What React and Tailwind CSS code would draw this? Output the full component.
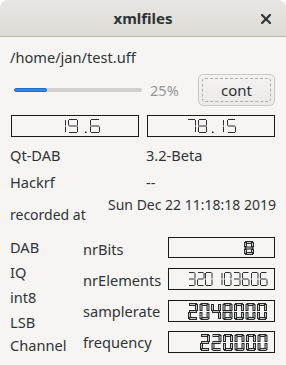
import React from 'react';

const SEGS = {
    '0': 'abcdef',
    '1': 'bc',
    '2': 'abged',
    '3': 'abgcd',
    '4': 'fgbc',
    '5': 'afgcd',
    '6': 'afgedc',
    '7': 'abc',
    '8': 'abcdefg',
    '9': 'abcdfg',
};

// one seven segment digit, hollow segments like QLCDNumber's outline mode
const Digit = ({ ch, x, y, w, h, t, hollow }) => {
    if (ch === '.') {
        return hollow
            ? <rect x={x + 0.5} y={y + h - t + 0.5} width={t - 1} height={t - 1} fill="none" stroke="#1c1f20" />
            : <rect x={x} y={y + h - 1.5} width={1.5} height={1.5} fill="#1c1f20" />;
    }
    const half = h / 2;
    const r = {
        a: [x + 1, y, w - 2, t],
        d: [x + 1, y + h - t, w - 2, t],
        g: [x + 1, y + half - t / 2, w - 2, t],
        f: [x, y + 1, t, half - 1.5],
        b: [x + w - t, y + 1, t, half - 1.5],
        e: [x, y + half + 0.5, t, half - 1.5],
        c: [x + w - t, y + half + 0.5, t, half - 1.5],
    };
    const list = (SEGS[ch] || '').split('');
    return (
        <g>
            {list.map((s) => {
                const [rx, ry, rw, rh] = r[s];
                return hollow ? (
                    <rect key={s} x={rx + 0.5} y={ry + 0.5} width={Math.max(rw - 1, 0.5)} height={Math.max(rh - 1, 0.5)} fill="#c9c7c4" stroke="#25292a" strokeWidth="1" />
                ) : (
                    <rect key={s} x={rx} y={ry} width={rw} height={rh} fill="#2b2f30" />
                );
            })}
        </g>
    );
};

const Lcd = ({ value, w, h, xs, top, dw, dh, t, hollow }) => (
    <div className="border border-[#1a1a1a] bg-[#f6f5f4] shrink-0" style={{ width: w, height: h }}>
        <svg width={w - 2} height={h - 2} viewBox={`1 1 ${w - 2} ${h - 2}`} aria-label={value} role="img">
            <title>{value}</title>
            {value.split('').map((ch, i) => (
                <Digit key={i} ch={ch} x={xs[i]} y={top} w={dw} h={dh} t={t} hollow={hollow} />
            ))}
        </svg>
    </div>
);

const App = () => {
    return (
        <div className="w-[286px] h-[365px] bg-[#f6f5f4] rounded-t-[8px] overflow-hidden font-['Noto_Sans',sans-serif] text-[#2e3436] text-[14.6px]">
            {/* title bar */}
            <div className="relative h-[37px] flex items-center justify-center bg-gradient-to-b from-[#e8e6e3] to-[#dedad6] border-b border-[#bfb8b1]">
                <span className="font-bold text-[15px] leading-none">xmlfiles</span>
                <svg className="absolute right-[15px] top-[14px]" width="10" height="10" viewBox="0 0 10 10">
                    <path d="M1 1 L9 9 M9 1 L1 9" stroke="#2e3436" strokeWidth="2.2" strokeLinecap="square" />
                </svg>
            </div>

            <div className="px-[10px]">
                <div className="mt-[10px] leading-[20px]">/home/jan/test.uff</div>

                <div className="mt-[7px] h-[32px] flex items-center">
                    <div className="ml-[4px] w-[128px] h-[4px] rounded-full bg-[#d3cfcc] overflow-hidden">
                        <div className="w-[33px] h-full rounded-full bg-[#3584e4] border border-[#1c6fd1]" />
                    </div>
                    <span className="ml-[8px] text-[#929595] leading-none">25%</span>
                    <button className="ml-auto mr-[1px] w-[77px] h-[32px] rounded-[5px] border border-[#cdc7c2] bg-gradient-to-b from-[#f4f2f1] to-[#ece9e7] p-[3px]">
                        <div className="w-full h-full rounded-[3px] border border-dashed border-[#b3afab] flex items-center justify-center leading-none text-[15px]">
                            cont
                        </div>
                    </button>
                </div>

                <div className="mt-[9px] flex gap-[8px] ml-[1px]">
                    <Lcd value="19.6" w={128} h={22} xs={[45, 57, 74, 79]} top={4} dw={10} dh={14} t={1} hollow={false} />
                    <Lcd value="78.15" w={128} h={22} xs={[40, 51, 65, 68, 80]} top={4} dw={9} dh={14} t={1} hollow={false} />
                </div>

                <div className="mt-[8px] flex leading-[20px]">
                    <span className="w-[136px]">Qt-DAB</span>
                    <span>3.2-Beta</span>
                </div>
                <div className="mt-[7px] flex leading-[20px]">
                    <span className="w-[136px]">Hackrf</span>
                    <span>--</span>
                </div>
                <div className="mt-[3px] h-[30px] flex leading-[20px]">
                    <span className="w-[98px] self-end text-[14px]">recorded at</span>
                    <span className="self-start text-[14px]">Sun Dec 22 11:18:18 2019</span>
                </div>

                <div className="mt-[12px] flex">
                    <div className="w-[73px] flex flex-col leading-[20px]">
                        <span>DAB</span>
                        <span className="mt-[5px]">IQ</span>
                        <span className="mt-[5px]">int8</span>
                        <span className="mt-[5px]">LSB</span>
                        <span className="mt-[3px]">Channel</span>
                    </div>
                    <div className="flex-1 flex flex-col">
                        <div className="h-[21px] flex items-center">
                            <span className="w-[85px] pt-[4px]">nrBits</span>
                            <Lcd value="8" w={107} h={21} xs={[76]} top={4} dw={10} dh={14} t={3} hollow={true} />
                        </div>
                        <div className="mt-[10px] h-[22px] flex items-center">
                            <span className="w-[85px] pt-[3px]">nrElements</span>
                            <Lcd value="320103606" w={107} h={22} xs={[20, 29, 37, 47, 56, 65, 74, 83, 92]} top={4} dw={7.5} dh={14} t={1} hollow={false} />
                        </div>
                        <div className="mt-[10px] h-[22px] flex items-center">
                            <span className="w-[85px] pt-[2px]">samplerate</span>
                            <Lcd value="2048000" w={107} h={22} xs={[20, 31.5, 43, 54.5, 66, 77.5, 89]} top={3} dw={10} dh={17} t={3} hollow={true} />
                        </div>
                        <div className="mt-[9px] h-[22px] flex items-center">
                            <span className="w-[85px] pt-[2px]">frequency</span>
                            <Lcd value="220000" w={107} h={22} xs={[32, 43.5, 55, 66.5, 78, 89.5]} top={3} dw={10} dh={17} t={3} hollow={true} />
                        </div>
                    </div>
                </div>
            </div>
        </div>
    );
};

export default App;
